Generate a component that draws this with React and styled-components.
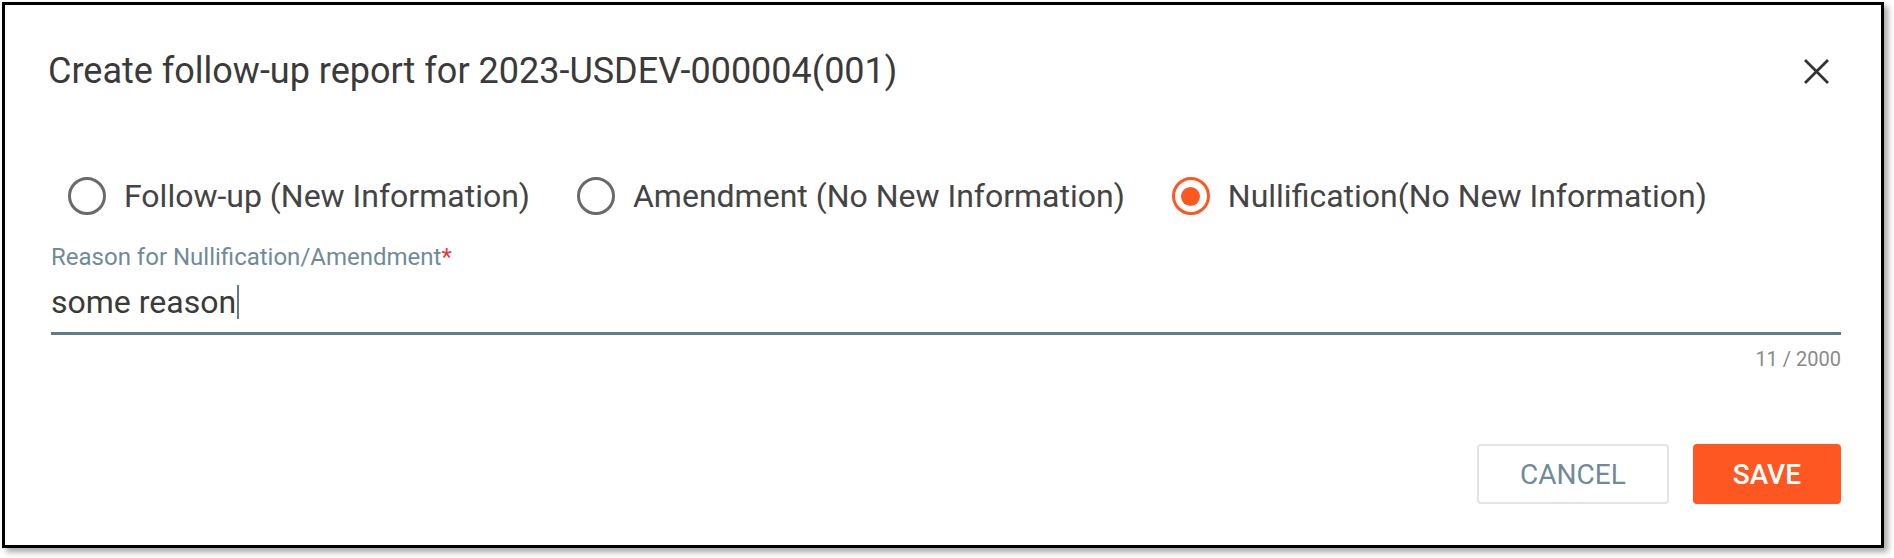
import React from 'react';
import styled, { createGlobalStyle } from 'styled-components';

const colors = {
  text: '#3a3a3a',
  label: '#444444',
  muted: '#6f8b99',
  line: '#5f7c8a',
  ring: '#6a6a6a',
  accent: '#ff5722',
  border: '#e4e4e4',
};

const GlobalStyle = createGlobalStyle`
  * {
    box-sizing: border-box;
  }
  body {
    margin: 0;
    background: #ffffff;
    font-family: Roboto, 'Noto Sans', Arial, sans-serif;
  }
`;

const Page = styled.div`
  padding: 2px 10px 11px 2px;
`;

const Dialog = styled.section`
  width: 1882px;
  border: 3px solid #000000;
  background: #ffffff;
  box-shadow: 4px 4px 6px rgba(0, 0, 0, 0.35);
  padding: 0 40px 41px 46px;
  display: flex;
  flex-direction: column;
`;

const Header = styled.header`
  height: 132px;
  display: flex;
  align-items: center;
  justify-content: space-between;
`;

const Title = styled.h2`
  margin: 0 0 0 -3px;
  font-size: 36px;
  line-height: 48px;
  font-weight: 400;
  color: ${colors.text};
`;

const CloseButton = styled.button`
  width: 48px;
  height: 48px;
  margin-right: 1px;
  padding: 0;
  border: none;
  background: none;
  display: flex;
  align-items: center;
  justify-content: center;
  cursor: pointer;
`;

const RadioGroup = styled.div`
  margin-top: 39px;
  padding-left: 17px;
  height: 40px;
  display: flex;
  align-items: center;
  gap: 47px;
`;

const RadioOption = styled.label`
  display: flex;
  align-items: center;
  gap: 18px;
  font-size: 32px;
  line-height: 40px;
  color: ${colors.label};
  cursor: pointer;
`;

const RadioCircle = styled.span`
  width: 38px;
  height: 38px;
  border-radius: 50%;
  border: ${(p) => (p.checked ? `3.5px solid ${colors.accent}` : `3px solid ${colors.ring}`)};
  display: flex;
  align-items: center;
  justify-content: center;
  flex-shrink: 0;
  &::after {
    content: '';
    width: 19px;
    height: 19px;
    border-radius: 50%;
    background: ${colors.accent};
    display: ${(p) => (p.checked ? 'block' : 'none')};
  }
`;

const Field = styled.div`
  margin-top: 27px;
  display: flex;
  flex-direction: column;
`;

const FieldLabel = styled.div`
  font-size: 24px;
  line-height: 28px;
  color: ${colors.muted};
`;

const Required = styled.span`
  color: #e53935;
`;

const InputText = styled.div`
  margin-top: 11px;
  height: 40px;
  font-size: 32px;
  line-height: 40px;
  color: ${colors.text};
  display: flex;
  align-items: center;
`;

const Caret = styled.span`
  width: 2px;
  height: 34px;
  margin-left: 1px;
  background: ${colors.line};
`;

const Underline = styled.div`
  margin-top: 10px;
  height: 3px;
  background: ${colors.line};
`;

const Counter = styled.div`
  margin-top: 12px;
  font-size: 20px;
  line-height: 24px;
  text-align: right;
  color: #8a8a8a;
`;

const Actions = styled.div`
  margin-top: 73px;
  display: flex;
  justify-content: flex-end;
  gap: 24px;
`;

const Button = styled.button`
  height: 60px;
  padding: 0 ${(p) => (p.primary ? '40px' : '41px')};
  border-radius: 4px;
  border: ${(p) => (p.primary ? 'none' : `2px solid ${colors.border}`)};
  background: ${(p) => (p.primary ? colors.accent : '#ffffff')};
  color: ${(p) => (p.primary ? '#ffffff' : colors.muted)};
  font-family: Roboto, Arial, sans-serif;
  font-size: 28px;
  font-weight: ${(p) => (p.primary ? 500 : 400)};
  cursor: pointer;
`;

const options = [
  { label: 'Follow-up (New Information)', checked: false },
  { label: 'Amendment (No New Information)', checked: false },
  { label: 'Nullification(No New Information)', checked: true },
];

export default function App() {
  return (
    <Page>
      <GlobalStyle />
      <Dialog>
        <Header>
          <Title>Create follow-up report for 2023-USDEV-000004(001)</Title>
          <CloseButton aria-label="close">
            <svg width="25" height="25" viewBox="0 0 25 25">
              <path d="M2 2 L23 23 M23 2 L2 23" stroke="#333" strokeWidth="2.8" strokeLinecap="square" />
            </svg>
          </CloseButton>
        </Header>
        <RadioGroup>
          {options.map((o) => (
            <RadioOption key={o.label}>
              <RadioCircle checked={o.checked} />
              {o.label}
            </RadioOption>
          ))}
        </RadioGroup>
        <Field>
          <FieldLabel>
            Reason for Nullification/Amendment<Required>*</Required>
          </FieldLabel>
          <InputText>
            some reason
            <Caret />
          </InputText>
          <Underline />
          <Counter>11 / 2000</Counter>
        </Field>
        <Actions>
          <Button>CANCEL</Button>
          <Button primary>SAVE</Button>
        </Actions>
      </Dialog>
    </Page>
  );
}
